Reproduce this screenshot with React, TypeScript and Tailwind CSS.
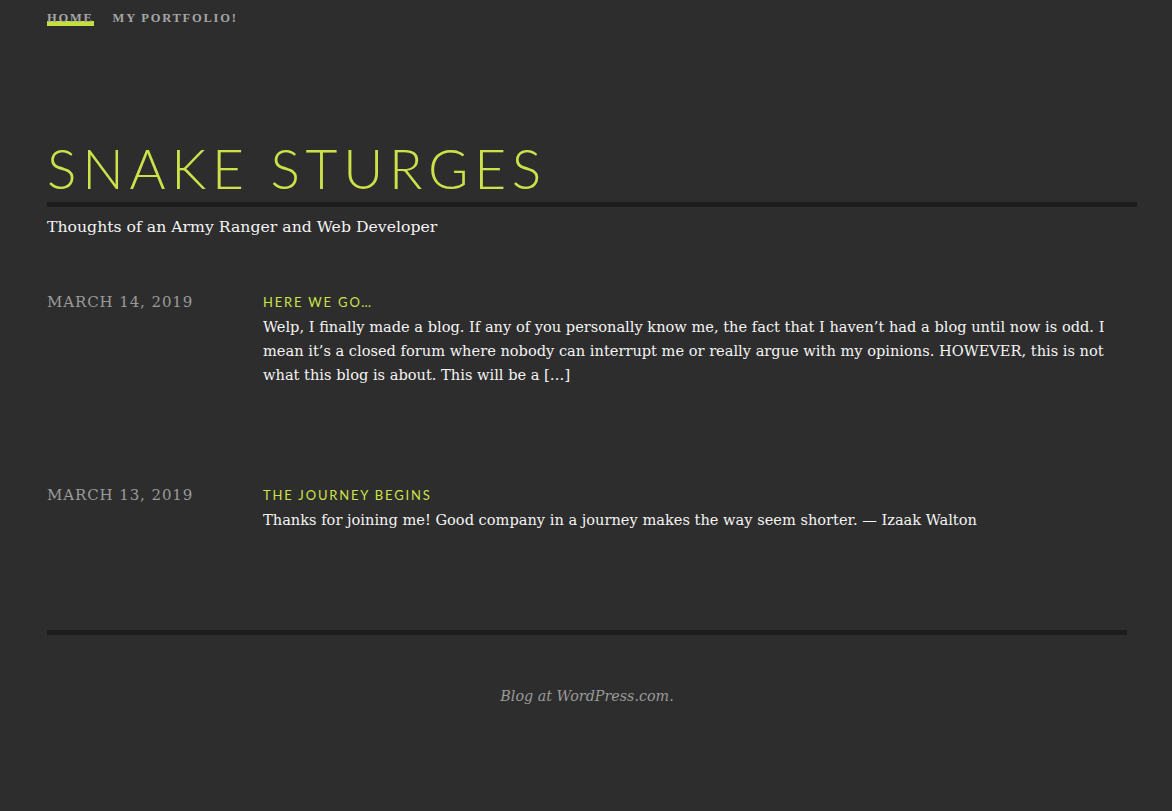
import React from 'react';

const posts = [
  {
    date: 'March 14, 2019',
    title: 'Here we go…',
    body: 'Welp, I finally made a blog. If any of you personally know me, the fact that I haven’t had a blog until now is odd. I mean it’s a closed forum where nobody can interrupt me or really argue with my opinions. HOWEVER, this is not what this blog is about. This will be a […]',
  },
  {
    date: 'March 13, 2019',
    title: 'The Journey Begins',
    body: 'Thanks for joining me! Good company in a journey makes the way seem shorter. — Izaak Walton',
  },
];

const serif = "font-['DejaVu_Serif','Liberation_Serif',serif]";

export default function App() {
  return (
    <div className="min-h-[811px] bg-[#2d2d2d] px-[47px]">
      <nav className={`flex gap-[19px] pt-[10px] text-[12.5px] font-bold uppercase tracking-[0.14em] text-[#a5a5a5] font-['Liberation_Serif',serif]`}>
        <a className="leading-[16px] shadow-[inset_0_-5px_0_#c5df3e]">Home</a>
        <a className="leading-[16px]">My Portfolio!</a>
      </nav>

      <header className="mt-[114px] mr-[-12px]">
        <h1 className="font-['Lato','Open_Sans',sans-serif] text-[55px] font-light uppercase leading-[56px] tracking-[0.105em] text-[#cde24a]">
          Snake Sturges
        </h1>
        <div className="mt-[6px] h-[5px] bg-[#1c1c1c]" />
        <p className={`mt-[8px] text-[15.7px] leading-[24px] text-[#f4f4f4] ${serif}`}>
          Thoughts of an Army Ranger and Web Developer
        </p>
      </header>

      <main className="mt-[53px]">
        {posts.map((p) => (
          <article key={p.title} className="mb-[98px] flex">
            <div className={`w-[216px] shrink-0 text-[15px] uppercase tracking-[0.06em] leading-[20px] text-[#9a9a9a] ${serif}`}>
              {p.date}
            </div>
            <div className="w-[850px]">
              <h2 className="font-['Lato','Open_Sans',sans-serif] text-[13px] uppercase tracking-[0.14em] leading-[20px] text-[#cde24a]">
                {p.title}
              </h2>
              <p className={`mt-[3px] text-[14.6px] leading-[24px] text-[#f4f4f4] ${serif}`}>{p.body}</p>
            </div>
          </article>
        ))}
      </main>

      <footer>
        <div className="mt-[8px] h-[5px] w-[1080px] bg-[#1c1c1c]" />
        <p className={`mt-[51px] w-[1080px] text-center text-[14.3px] italic text-[#9a9a9a] ${serif}`}>
          Blog at WordPress.com.
        </p>
      </footer>
    </div>
  );
}
